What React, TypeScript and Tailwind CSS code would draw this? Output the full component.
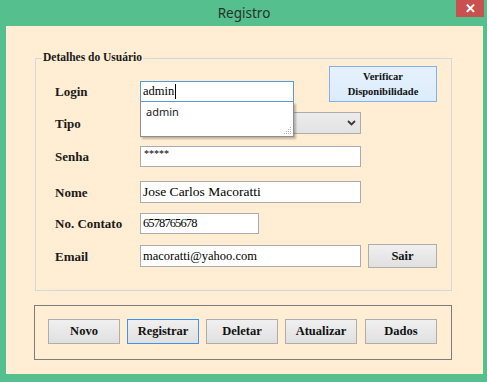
import React from "react";

const serif = { fontFamily: '"Liberation Serif", "Times New Roman", serif' };
const sans = { fontFamily: '"Noto Sans", "Open Sans", sans-serif' };

function Label({ children }: { children: React.ReactNode }) {
  return (
    <div className="w-[85px] shrink-0 text-[13px] font-bold text-[#1a1a1a] leading-none" style={serif}>
      {children}
    </div>
  );
}

function TextBox({
  value,
  w,
  h = 21,
  focused = false,
  size = 13,
  tracking = 0,
}: {
  value: string;
  w: number;
  h?: number;
  focused?: boolean;
  size?: number;
  tracking?: number;
}) {
  return (
    <div
      className={`flex items-center bg-white pl-[2px] border ${focused ? "border-[#5a9ad8]" : "border-[#a9abb0]"} text-black`}
      style={{ width: w, height: h, fontSize: size, letterSpacing: tracking, ...serif }}
    >
      {value}
      {focused && <span className="ml-[1px] inline-block h-[15px] w-[1px] bg-black" />}
    </div>
  );
}

function Btn({ children, blue = false }: { children: React.ReactNode; blue?: boolean }) {
  return (
    <div
      className={`flex h-[25px] w-[72px] items-center justify-center border bg-gradient-to-b from-[#f0f0f0] to-[#e0e0e0] text-[12.5px] font-bold text-[#111] ${blue ? "border-[#3c94f0]" : "border-[#adadad]"}`}
      style={serif}
    >
      {children}
    </div>
  );
}

export default function App() {
  return (
    <div className="flex h-[382px] w-[487px] flex-col bg-[#55bf8e]">
      <div className="relative flex h-[26px] items-center justify-center">
        <span className="pl-[1px] text-[13.5px] text-[#26332d]" style={sans}>Registro</span>
        <div className="absolute right-[3px] top-0 flex h-[17px] w-[28px] items-center justify-center bg-[#c8504e] text-[13px] font-bold text-white" style={sans}>
          ✕
        </div>
      </div>
      <div className="ml-[6px] h-[348px] w-[477px] bg-[#ffeed3] pt-[32px] pl-[29px]">
        {/* Detalhes do Usuário */}
        <div className="relative h-[233px] w-[417px] border border-[#d3dade] pt-[22px] pl-[19px] pr-[14px]">
          <div className="absolute left-[6px] top-[-7px] bg-[#ffeed3] px-[1px] text-[11.5px] font-bold leading-none text-[#1a1a1a]" style={serif}>
            Detalhes do Usuário
          </div>
          {/* Login row */}
          <div className="relative flex h-[21px] items-center">
            <Label>Login</Label>
            <div className="relative">
              <TextBox value="admin" w={154} focused size={12.5} />
              <div className="absolute left-0 top-[21px] z-10 h-[35px] w-[154px] border border-t-0 border-[#8d8d8d] bg-white pl-[5px] pt-[2px] text-[11px] text-[#222] shadow-[2px_2px_2px_rgba(0,0,0,0.25)]" style={sans}>
                admin
                <svg className="absolute bottom-[1px] right-[1px]" width="9" height="9" viewBox="0 0 9 9">
                  <rect x="7" y="1" width="1" height="1" fill="#b0b0b0" />
                  <rect x="5" y="3" width="1" height="1" fill="#b0b0b0" />
                  <rect x="7" y="3" width="1" height="1" fill="#b0b0b0" />
                  <rect x="3" y="5" width="1" height="1" fill="#b0b0b0" />
                  <rect x="5" y="5" width="1" height="1" fill="#b0b0b0" />
                  <rect x="7" y="5" width="1" height="1" fill="#b0b0b0" />
                  <rect x="1" y="7" width="1" height="1" fill="#b0b0b0" />
                  <rect x="3" y="7" width="1" height="1" fill="#b0b0b0" />
                  <rect x="5" y="7" width="1" height="1" fill="#b0b0b0" />
                  <rect x="7" y="7" width="1" height="1" fill="#b0b0b0" />
                </svg>
              </div>
            </div>
            <div
              className="ml-auto flex h-[36px] w-[108px] shrink-0 flex-col items-center justify-center self-end border border-[#7eb4ea] bg-gradient-to-b from-[#e6f1fc] to-[#dcecfc] text-[10.5px] font-bold leading-[15px] text-[#111]"
              style={serif}
            >
              <span>Verificar</span>
              <span>Disponibilidade</span>
            </div>
          </div>
          {/* Tipo */}
          <div className="mt-[10px] flex h-[22px] items-center">
            <Label>Tipo</Label>
            <div className="flex h-[22px] w-[221px] items-center justify-end border border-[#acacac] bg-gradient-to-b from-[#ececec] to-[#e2e2e2] pr-[4px]">
              <svg width="9" height="6" viewBox="0 0 9 6">
                <path d="M1 1 L4.5 4.5 L8 1" stroke="#3a3a3a" strokeWidth="1.8" fill="none" />
              </svg>
            </div>
          </div>
          {/* Senha */}
          <div className="mt-[12px] flex h-[21px] items-center">
            <Label>Senha</Label>
            <div
              className="h-[21px] w-[221px] border border-[#a9abb0] bg-white pl-[3px] pt-[1px] text-[10px] leading-[12px] text-black"
              style={serif}
            >
              *****
            </div>
          </div>
          {/* Nome */}
          <div className="mt-[14px] flex h-[22px] items-center">
            <Label>Nome</Label>
            <TextBox value="Jose Carlos Macoratti" w={221} h={22} size={13.5} />
          </div>
          {/* Contato */}
          <div className="mt-[10px] flex h-[21px] items-center">
            <Label>No. Contato</Label>
            <TextBox value="6578765678" w={119} size={12.5} tracking={-0.9} />
          </div>
          {/* Email */}
          <div className="mt-[10px] flex h-[24px] items-center">
            <Label>Email</Label>
            <TextBox value="macoratti@yahoo.com" w={221} h={22} size={12.5} />
            <div
              className="ml-auto flex h-[24px] w-[69px] items-center justify-center border border-[#adadad] bg-gradient-to-b from-[#f0f0f0] to-[#e0e0e0] text-[12.5px] font-bold text-[#111]"
              style={serif}
            >
              Sair
            </div>
          </div>
        </div>
        {/* Bottom group */}
        <div className="mt-[14px] -ml-[1px] flex h-[55px] w-[418px] gap-[7px] border border-[#7d7d7d] pl-[13px] pt-[13px]">
          <Btn>Novo</Btn>
          <Btn blue>Registrar</Btn>
          <Btn>Deletar</Btn>
          <Btn>Atualizar</Btn>
          <div className="ml-[1px]">
            <Btn>Dados</Btn>
          </div>
        </div>
      </div>
    </div>
  );
}
